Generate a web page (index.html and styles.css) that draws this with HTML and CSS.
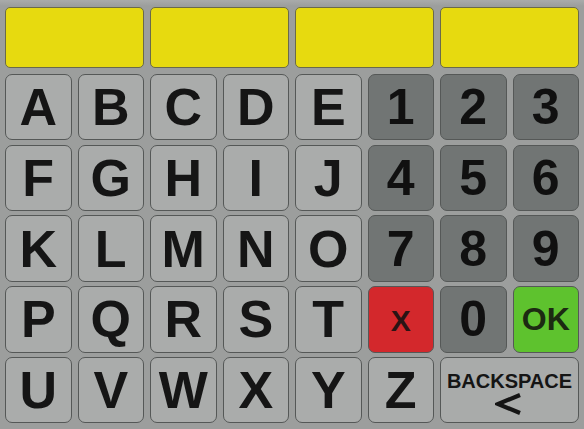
FILE: index.html
```html
<!DOCTYPE html>
<html>
<head>
<meta charset="utf-8">
<link rel="stylesheet" href="styles.css">
</head>
<body>
<div class="pad">
  <div class="field"></div>
  <div class="field"></div>
  <div class="field"></div>
  <div class="field"></div>

  <div class="key">A</div><div class="key">B</div><div class="key">C</div><div class="key">D</div><div class="key">E</div>
  <div class="key num">1</div><div class="key num">2</div><div class="key num">3</div>

  <div class="key">F</div><div class="key">G</div><div class="key">H</div><div class="key">I</div><div class="key">J</div>
  <div class="key num">4</div><div class="key num">5</div><div class="key num">6</div>

  <div class="key">K</div><div class="key">L</div><div class="key">M</div><div class="key">N</div><div class="key">O</div>
  <div class="key num">7</div><div class="key num">8</div><div class="key num">9</div>

  <div class="key">P</div><div class="key">Q</div><div class="key">R</div><div class="key">S</div><div class="key">T</div>
  <div class="key cancel">X</div><div class="key num">0</div><div class="key ok">OK</div>

  <div class="key">U</div><div class="key">V</div><div class="key">W</div><div class="key">X</div><div class="key">Y</div>
  <div class="key">Z</div>
  <div class="key back">
    <span class="back-label">BACKSPACE</span>
    <svg class="back-arrow" width="27" height="22" viewBox="0 0 27 22" aria-hidden="true">
      <polyline points="25,2 3,11 25,20" fill="none" stroke="#151515" stroke-width="4.2" stroke-linejoin="miter"/>
    </svg>
  </div>
</div>
</body>
</html>
```
FILE: styles.css
```css
html, body {
  margin: 0;
  padding: 0;
  background: #9c9e9d;
}

body {
  width: 584px;
  height: 429px;
  overflow: hidden;
  font-family: "Liberation Sans", Arial, sans-serif;
}

.pad {
  display: grid;
  grid-template-columns: repeat(8, 66.5px);
  grid-template-rows: 62.5px repeat(5, 66.5px);
  column-gap: 6px;
  row-gap: 4.3px;
  padding: 7px 0 0 5px;
  background: linear-gradient(180deg, #a9abaa 0px, #9c9e9d 6px);
  height: 429px;
  box-sizing: border-box;
}

.field {
  grid-column: span 2;
  height: 61px;
  background: #e7da0f;
  border: 1px solid #6a6a4a;
  border-radius: 5px;
  box-sizing: border-box;
}

.key {
  display: flex;
  align-items: center;
  justify-content: center;
  background: #aaacab;
  border: 1.5px solid #555857;
  border-radius: 7px;
  box-sizing: border-box;
  color: #151515;
  font-weight: bold;
  font-size: 52px;
  line-height: 1;
}

.num {
  background: #717574;
  font-size: 50px;
  color: #101010;
}

.cancel {
  background: #d3282c;
  font-size: 30px;
  color: #2a1414;
  padding-top: 4px;
}

.ok {
  background: #5ec22e;
  font-size: 32px;
  color: #1c2a12;
}

.back {
  grid-column: span 2;
  flex-direction: column;
  justify-content: flex-start;
  padding-top: 13px;
  background: #a9abaa;
}

.back-label {
  font-size: 20px;
  line-height: 1;
}

.back-arrow {
  display: block;
  margin-top: 2px;
  margin-right: 2px;
}
```
